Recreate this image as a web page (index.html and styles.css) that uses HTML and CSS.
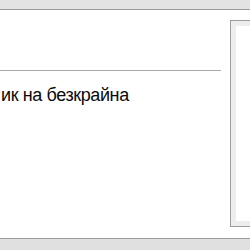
FILE: index.html
```html
<!DOCTYPE html>
<html lang="bg">
<head>
    <meta charset="UTF-8">
    <title>Document</title>
    <link rel="stylesheet" href="styles.css">
</head>
<body>
    <div class="topbar"></div>
    <div class="main">
        <div class="content">
            <div class="head"></div>
            <h1 class="title">ик на безкрайна</h1>
        </div>
        <div class="side">
            <div class="side-inner"></div>
        </div>
    </div>
    <div class="bottombar"></div>
</body>
</html>
```

FILE: styles.css
```css
*{
    margin: 0;
    padding: 0;
    box-sizing: border-box;
}
body{
    width: 250px;
    height: 250px;
    overflow: hidden;
    background-color: #fff;
    font-family: "Liberation Sans", Arial, sans-serif;
}
.topbar{
    height: 10px;
    background-color: #e3e3e3;
    border-bottom: 1px solid #9c9c9c;
}
.main{
    display: flex;
    height: 228px;
    background-color: #fff;
}
.content{
    width: 221px;
    flex-shrink: 0;
}
.head{
    height: 61px;
    border-bottom: 1px solid #a9a9a9;
}
.title{
    margin-top: 14px;
    padding-left: 1px;
    font-size: 18px;
    font-weight: normal;
    letter-spacing: -0.4px;
    line-height: 20px;
    color: #0a0a0a;
    white-space: nowrap;
}
.side{
    margin-top: 10px;
    margin-left: 9px;
    width: 30px;
    flex-shrink: 0;
    height: 207px;
    border: 1px solid #9e9e9e;
    border-right: none;
    padding: 5px 0 5px 5px;
    background-color: #ededed;
}
.side-inner{
    height: 100%;
    background-color: #fff;
}
.bottombar{
    height: 12px;
    background-color: #e0e0e0;
    border-top: 1px solid #9c9c9c;
}
```
